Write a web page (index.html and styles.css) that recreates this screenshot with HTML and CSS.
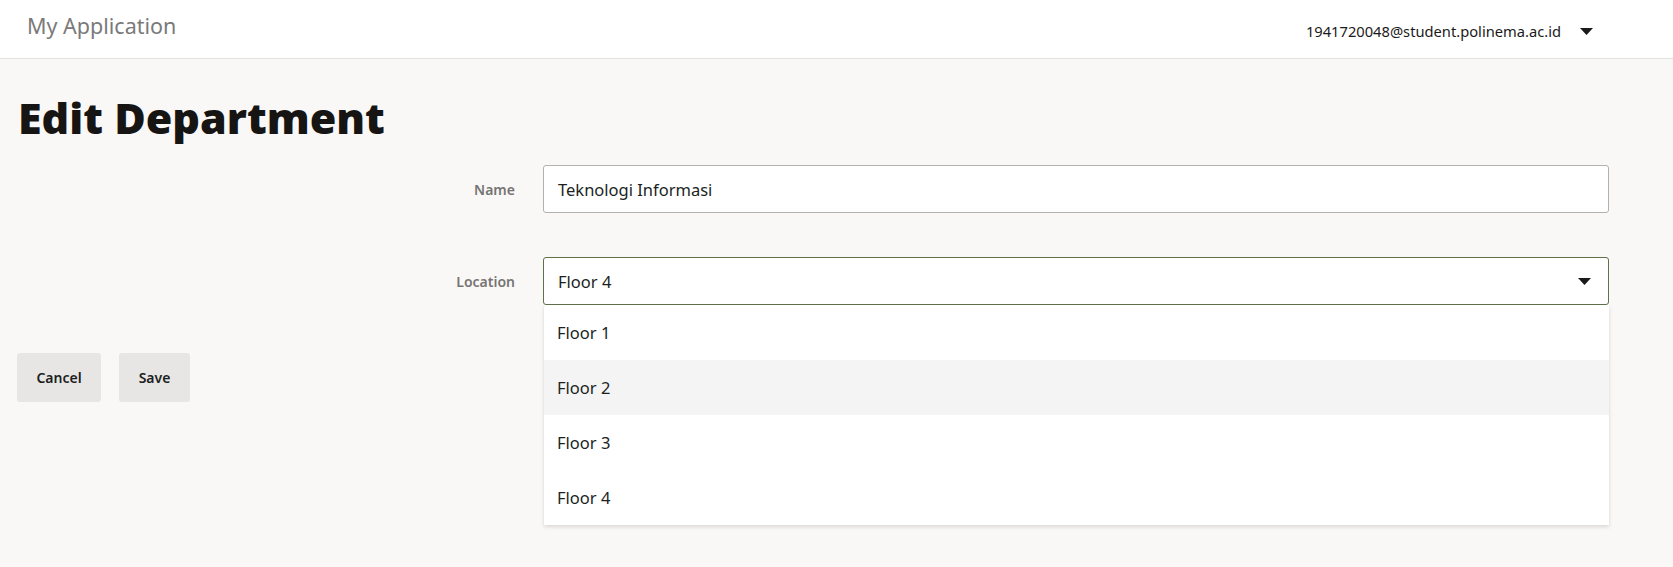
FILE: index.html
```html
<!DOCTYPE html>
<html lang="en">
<head>
<meta charset="utf-8">
<title>Edit Department</title>
<link rel="stylesheet" href="styles.css">
</head>
<body>
<header class="topbar">
  <div class="brand">My Application</div>
  <div class="user">
    <span class="user-email">1941720048@student.polinema.ac.id</span>
    <svg class="caret" width="13" height="7" viewBox="0 0 13 7"><path d="M0 0H13L6.5 7Z" fill="#1b1a19"/></svg>
  </div>
</header>
<main class="page">
  <h1 class="title">Edit Department</h1>
  <form class="form">
    <label class="label">Name</label>
    <div class="field">
      <div class="input">Teknologi Informasi</div>
    </div>
    <label class="label">Location</label>
    <div class="field">
      <div class="select">
        <span>Floor 4</span>
        <svg class="caret" width="13" height="7" viewBox="0 0 13 7"><path d="M0 0H13L6.5 7Z" fill="#1b1a19"/></svg>
      </div>
      <ul class="menu">
        <li class="option">Floor 1</li>
        <li class="option hover">Floor 2</li>
        <li class="option">Floor 3</li>
        <li class="option">Floor 4</li>
      </ul>
    </div>
  </form>
  <div class="actions">
    <button class="btn btn-cancel" type="button">Cancel</button>
    <button class="btn btn-save" type="button">Save</button>
  </div>
</main>
</body>
</html>
```

FILE: styles.css
```css
* { box-sizing: border-box; }
html, body { margin: 0; padding: 0; }
body {
  font-family: "Noto Sans", "Open Sans", sans-serif;
  background: #f9f8f7;
  color: #201f1e;
  height: 567px;
  overflow: hidden;
}
.topbar {
  height: 59px;
  background: #ffffff;
  border-bottom: 1px solid #e4e2e0;
  display: flex;
  align-items: center;
  justify-content: space-between;
  padding: 0 80px 0 27px;
}
.brand {
  font-size: 21.5px;
  color: #7a7a7a;
  margin-top: -8px;
}
.user {
  display: flex;
  align-items: center;
  gap: 19px;
  margin-top: 4px;
}
.user-email {
  font-size: 14.7px;
  color: #1b1a19;
}
.page {
  padding: 0 64px 0 17px;
}
.title {
  font-family: "Open Sans", "Noto Sans", sans-serif;
  font-weight: 800;
  font-size: 43px;
  margin: 31px 0 19px 1px;
  line-height: 56px;
  color: #161514;
}
.form {
  display: grid;
  grid-template-columns: 498px 1fr;
  column-gap: 28px;
  row-gap: 44px;
  align-items: center;
}
.label {
  text-align: right;
  font-size: 14px;
  font-weight: 600;
  color: #767473;
}
.field { position: relative; }
.input, .select {
  height: 48px;
  background: #fff;
  border: 1px solid #b3b0ad;
  border-radius: 3px;
  padding: 0 14px;
  display: flex;
  align-items: center;
  font-size: 16.5px;
  color: #201f1e;
}
.select {
  border-color: #5e7149;
  justify-content: space-between;
  padding-right: 17px;
}
.menu {
  position: absolute;
  top: 48px;
  left: 1px;
  right: 0;
  margin: 0;
  padding: 0;
  list-style: none;
  background: #fff;
  box-shadow: 0 1.6px 4px rgba(0,0,0,0.13), 0 0.3px 1px rgba(0,0,0,0.1);
  z-index: 5;
}
.option {
  height: 55px;
  display: flex;
  align-items: center;
  padding-left: 13px;
  font-size: 16.5px;
  color: #201f1e;
}
.option.hover { background: #f4f4f4; }
.actions {
  display: flex;
  gap: 18px;
  margin-top: 48px;
}
.btn {
  height: 49px;
  border: none;
  border-radius: 3px;
  background: #e8e6e4;
  font-family: inherit;
  font-size: 14px;
  font-weight: 600;
  color: #201f1e;
  padding: 0 18px;
}
.btn-cancel { width: 84px; }
.btn-save { width: 71px; }
```
